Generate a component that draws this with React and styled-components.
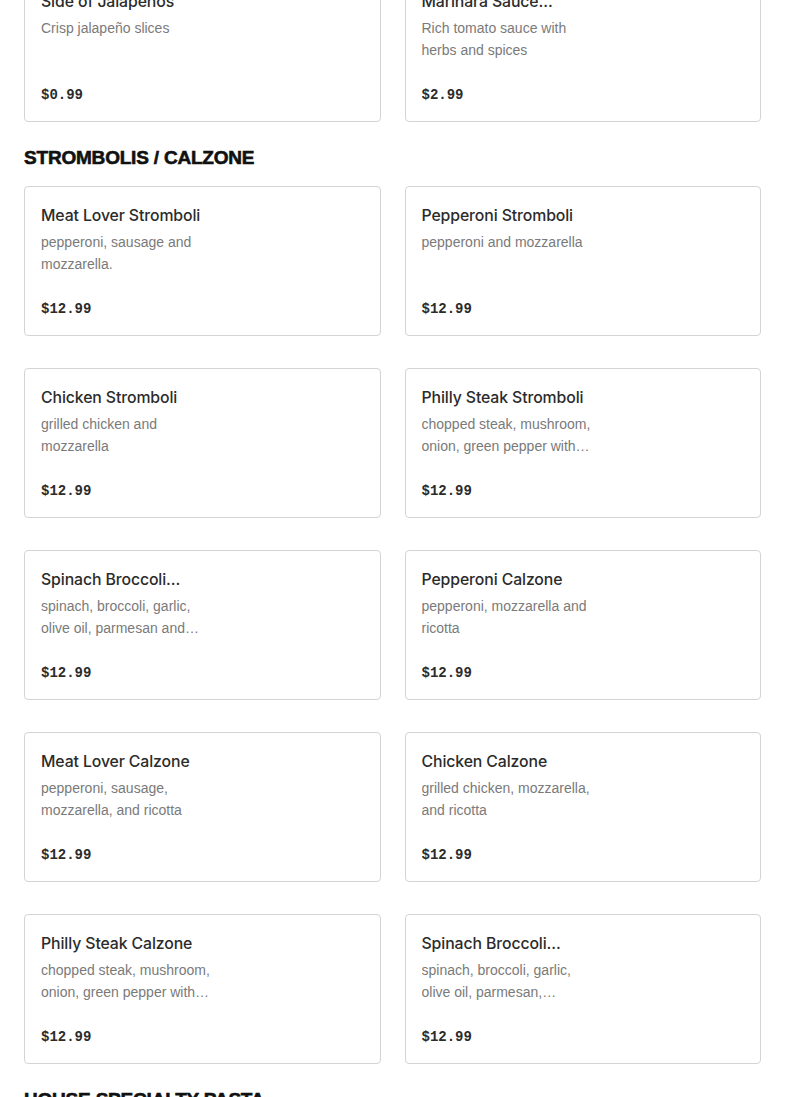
import React from "react"
import styled, { createGlobalStyle } from "styled-components"

const GlobalStyle = createGlobalStyle`
    body {
        margin: 0;
        background: #ffffff;
        font-family: "Liberation Sans", Arial, sans-serif;
        color: #2b2b2b;
    }
`

const Page = styled.div`
    padding: 0 24px;
    margin-top: -28px;
`

const Section = styled.section`
    margin-bottom: 24px;
`

const SectionTitle = styled.h2`
    margin: 0 0 16px;
    font-family: "Liberation Sans", Arial, sans-serif;
    font-weight: 700;
    font-size: 19px;
    line-height: 24px;
    letter-spacing: -0.2px;
    -webkit-text-stroke: 0.6px #111;
    color: #111;
    text-transform: uppercase;
`

const Grid = styled.div`
    display: grid;
    grid-template-columns: 1fr 1fr;
    column-gap: 24px;
    row-gap: 32px;
`

const Card = styled.div`
    border: 1px solid #d4d4d4;
    border-radius: 4px;
    padding: 16px 16px 16px;
    height: 150px;
    box-sizing: border-box;
    display: flex;
    flex-direction: column;
`

const ItemName = styled.div`
    padding-top: 1px;
    font-family: Inter, "Liberation Sans", sans-serif;
    font-size: 15.8px;
    line-height: 24px;
    font-weight: 500;
    letter-spacing: -0.1px;
    color: #2b2b2b;
    white-space: nowrap;
`

const ItemDesc = styled.div`
    margin-top: 3px;
    width: 182px;
    font-size: 14px;
    line-height: 22px;
    color: #7a7a7a;
    height: 44px;
    overflow: hidden;
    display: -webkit-box;
    -webkit-line-clamp: 2;
    -webkit-box-orient: vertical;
`

const Price = styled.div`
    margin-top: auto;
    font-family: "Liberation Mono", "DejaVu Sans Mono", monospace;
    font-weight: 700;
    font-size: 14px;
    line-height: 20px;
    color: #2b2b2b;
`

const sides = [
    { name: "Side of Jalapeños", desc: "Crisp jalapeño slices", price: "$0.99" },
    { name: "Marinara Sauce...", desc: "Rich tomato sauce with herbs and spices", price: "$2.99" },
]

const strombolis = [
    { name: "Meat Lover Stromboli", desc: "pepperoni, sausage and mozzarella.", price: "$12.99" },
    { name: "Pepperoni Stromboli", desc: "pepperoni and mozzarella", price: "$12.99" },
    { name: "Chicken Stromboli", desc: "grilled chicken and mozzarella", price: "$12.99" },
    { name: "Philly Steak Stromboli", desc: "chopped steak, mushroom, onion, green pepper with cheese", price: "$12.99" },
    { name: "Spinach Broccoli...", desc: "spinach, broccoli, garlic, olive oil, parmesan and mozzarella", price: "$12.99" },
    { name: "Pepperoni Calzone", desc: "pepperoni, mozzarella and ricotta", price: "$12.99" },
    { name: "Meat Lover Calzone", desc: "pepperoni, sausage, mozzarella, and ricotta", price: "$12.99" },
    { name: "Chicken Calzone", desc: "grilled chicken, mozzarella, and ricotta", price: "$12.99" },
    { name: "Philly Steak Calzone", desc: "chopped steak, mushroom, onion, green pepper with cheese", price: "$12.99" },
    { name: "Spinach Broccoli...", desc: "spinach, broccoli, garlic, olive oil, parmesan, mozzarella and ricotta", price: "$12.99" },
]

const MenuCard = ({ item }) => (
    <Card>
        <ItemName>{item.name}</ItemName>
        <ItemDesc>{item.desc}</ItemDesc>
        <Price>{item.price}</Price>
    </Card>
)

const App = () => {
    return (
        <>
            <GlobalStyle />
            <Page>
                <Section>
                    <Grid>
                        {sides.map((item, i) => <MenuCard key={i} item={item} />)}
                    </Grid>
                </Section>
                <Section>
                    <SectionTitle>Strombolis / Calzone</SectionTitle>
                    <Grid>
                        {strombolis.map((item, i) => <MenuCard key={i} item={item} />)}
                    </Grid>
                </Section>
                <Section>
                    <SectionTitle>House Specialty Pasta</SectionTitle>
                </Section>
            </Page>
        </>
    )
}

export default App
